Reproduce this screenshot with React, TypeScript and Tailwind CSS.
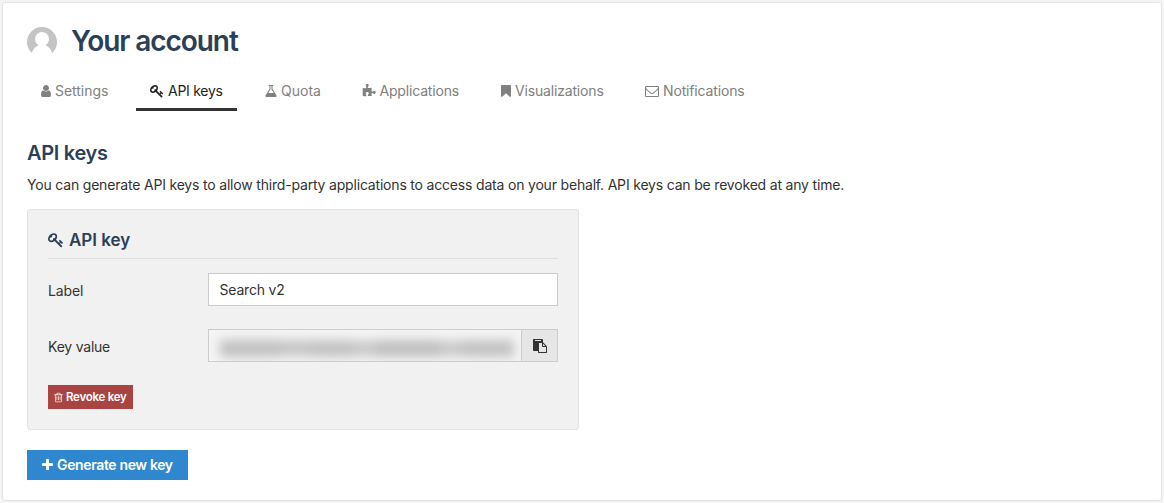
import React from "react";

const ICONS = {
  user: "M1536 1399q0 109-62.5 187t-150.5 78h-854q-88 0-150.5-78t-62.5-187q0-85 8.5-160.5t31.5-152 58.5-131 94-89 134.5-34.5q131 128 313 128t313-128q76 0 134.5 34.5t94 89 58.5 131 31.5 152 8.5 160.5zm-256-887q0 159-112.5 271.5t-271.5 112.5-271.5-112.5-112.5-271.5 112.5-271.5 271.5-112.5 271.5 112.5 112.5 271.5z",
  key: "M832 512q0-80-56-136t-136-56-136 56-56 136q0 42 19 83-41-19-83-19-80 0-136 56t-56 136 56 136 136 56 136-56 56-136q0-42-19-83 41 19 83 19 80 0 136-56t56-136zm851 704q0 17-49 66t-66 49q-9 0-28.5-16t-36.5-33-38.5-40-24.5-26l-96 96 220 220q28 28 28 68 0 42-39 81t-81 39q-40 0-68-28l-671-671q-176 131-365 131-163 0-265.5-102.5t-102.5-265.5q0-160 95-313t248-248 313-95q163 0 265.5 102.5t102.5 265.5q0 189-131 365l355 355 96-96q-3-3-26-24.5t-40-38.5-33-36.5-16-28.5q0-17 49-66t66-49q13 0 23 10 6 6 46 44.5t82 79.5 86.5 86 73 78 28.5 41z",
  flask: "M1591 1448q56 89 21.5 152.5t-140.5 63.5h-1152q-106 0-140.5-63.5t21.5-152.5l503-793v-399h-64q-26 0-45-19t-19-45 19-45 45-19h512q26 0 45 19t19 45-19 45-45 19h-64v399zm-779-725l-272 429h712l-272-429-20-31v-436h-128v436z",
  puzzle: "M1755 1083q0 81-44.5 135t-123.5 54q-41 0-77.5-17.5t-59-38-56.5-38-71-17.5q-110 0-110 124 0 39 16 115t15 115v5q-22 0-33 1-34 3-97.5 11.5t-115.5 13.5-98 5q-61 0-103-26.5t-42-83.5q0-37 17.5-71t38-56.5 38-59 17.5-77.5q0-79-54-123.5t-135-44.5q-84 0-143 45.5t-59 127.5q0 43 15 83t33.5 64.5 33.5 53 15 50.5q0 45-46 89-37 35-117 35-95 0-245-24-9-2-27.5-4t-27.5-4l-13-2q-1 0-3-1-2 0-2-1v-1024q2 1 17.5 3.5t34 5 21.5 3.5q150 24 245 24 80 0 117-35 46-44 46-89 0-22-15-50.5t-33.5-53-33.5-64.5-15-83q0-82 59-127.5t144-45.5q80 0 134 44.5t54 123.5q0 41-17.5 77.5t-38 59-38 56.5-17.5 71q0 57 42 83.5t103 26.5q64 0 180-15t163-17v2q-1 2-3.5 17.5t-5 34-3.5 21.5q-24 150-24 245 0 80 35 117 44 46 89 46 22 0 50.5-15t53-33.5 64.5-33.5 83-15q82 0 127.5 59t45.5 143z",
  bookmark: "M1420 128q23 0 44 9 33 13 52.5 41t19.5 62v1289q0 34-19.5 62t-52.5 41q-19 8-44 8-48 0-83-32l-441-424-441 424q-36 33-83 33-23 0-44-9-33-13-52.5-41t-19.5-62v-1289q0-34 19.5-62t52.5-41q21-9 44-9h1048z",
  envelope: "M1664 1504v-768q-32 36-69 66-268 206-426 338-51 43-83 67t-86.5 48.5-102.5 24.5h-2q-48 0-102.5-24.5t-86.5-48.5-83-67q-158-132-426-338-37-30-69-66v768q0 13 9.5 22.5t22.5 9.5h1472q13 0 22.5-9.5t9.5-22.5zm0-1051v-24.5l-.5-13-3-12.5-5.5-9-9-7.5-14-2.5h-1472q-13 0-22.5 9.5t-9.5 22.5q0 168 147 284 193 152 401 317 6 5 35 29.5t46 37.5 44.5 31.5 50.5 27.5 43 9h2q20 0 43-9t50.5-27.5 44.5-31.5 46-37.5 35-29.5q208-165 401-317 54-43 100.5-115.5t46.5-131.5zm128-37v1088q0 66-47 113t-113 47h-1472q-66 0-113-47t-47-113v-1088q0-66 47-113t113-47h1472q66 0 113 47t47 113z",
  paste: "M768 1664h896v-640h-416q-40 0-68-28t-28-68v-416h-384v1152zm256-1440v-64q0-13-9.5-22.5t-22.5-9.5h-704q-13 0-22.5 9.5t-9.5 22.5v64q0 13 9.5 22.5t22.5 9.5h704q13 0 22.5-9.5t9.5-22.5zm256 672h299l-299-299v299zm512 128v672q0 40-28 68t-68 28h-960q-40 0-68-28t-28-68v-160h-544q-40 0-68-28t-28-68v-1344q0-40 28-68t68-28h1088q40 0 68 28t28 68v328q21 13 36 28l408 408q28 28 48 76t20 88z",
  trash: "M704 736v576q0 14-9 23t-23 9h-64q-14 0-23-9t-9-23v-576q0-14 9-23t23-9h64q14 0 23 9t9 23zm256 0v576q0 14-9 23t-23 9h-64q-14 0-23-9t-9-23v-576q0-14 9-23t23-9h64q14 0 23 9t9 23zm256 0v576q0 14-9 23t-23 9h-64q-14 0-23-9t-9-23v-576q0-14 9-23t23-9h64q14 0 23 9t9 23zm128 724v-948h-896v948q0 22 7 40.5t14.5 27 10.5 8.5h832q3 0 10.5-8.5t14.5-27 7-40.5zm-672-1076h448l-48-117q-7-9-17-11h-317q-10 2-17 11zm928 32v64q0 14-9 23t-23 9h-96v948q0 83-47 143.5t-113 60.5h-832q-66 0-113-58.5t-47-141.5v-952h-96q-14 0-23-9t-9-23v-64q0-14 9-23t23-9h309l70-167q15-37 54-63t79-26h320q40 0 79 26t54 63l70 167h309q14 0 23 9t9 23z",
  plus: "M1600 736v192q0 40-28 68t-68 28h-416v416q0 40-28 68t-68 28h-192q-40 0-68-28t-28-68v-416h-416q-40 0-68-28t-28-68v-192q0-40 28-68t68-28h416v-416q0-40 28-68t68-28h192q40 0 68 28t28 68v416h416q40 0 68 28t28 68z",
};

type IconName = keyof typeof ICONS;

function Icon({ name, className, viewBox = "0 0 1792 1792" }: { name: IconName; className: string; viewBox?: string }) {
  return (
    <svg viewBox={viewBox} className={`shrink-0 ${className}`} fill="currentColor" aria-hidden="true">
      <path d={ICONS[name]} />
    </svg>
  );
}

const TABS: { label: string; icon: IconName; viewBox: string; width: string; iconClass: string; textClass: string; active?: boolean }[] = [
  { label: "Settings", icon: "user", viewBox: "256 0 1280 1792", width: "w-[95px]", iconClass: "h-[14px] w-[10px]", textClass: "tracking-[-0.04px]" },
  { label: "API keys", icon: "key", viewBox: "0 0 1792 1792", width: "w-[101px]", iconClass: "h-[14px] w-[14px]", textClass: "tracking-[-0.28px]", active: true },
  { label: "Quota", icon: "flask", viewBox: "128 0 1536 1792", width: "w-[84px]", iconClass: "h-[14px] w-[12px]", textClass: "" },
  { label: "Applications", icon: "puzzle", viewBox: "0 0 1792 1792", width: "w-[124px]", iconClass: "-ml-px h-[14px] w-[14px]", textClass: "tracking-[-0.18px] -ml-[0.5px]" },
  { label: "Visualizations", icon: "bookmark", viewBox: "256 0 1280 1792", width: "w-[130px]", iconClass: "h-[14px] w-[10px]", textClass: "tracking-[-0.17px]" },
  { label: "Notifications", icon: "envelope", viewBox: "0 0 1792 1792", width: "w-[128px]", iconClass: "h-[14px] w-[14px]", textClass: "tracking-[-0.15px]" },
];

export default function App() {
  return (
    <div className="h-[503px] w-[1164px] overflow-hidden bg-[#f4f4f4] px-[2px] pt-[2px] font-['Inter',sans-serif] text-[14px] text-[#333333]">
      <main className="h-[499px] w-[1160px] rounded-[3px] border border-[#e3e3e3] bg-white px-6">
        <header className="flex h-[76px] items-center gap-[14px] pt-px">
          <svg viewBox="0 0 30 30" className="h-[30px] w-[30px] shrink-0" aria-hidden="true">
            <circle cx="15" cy="15" r="15" fill="#c4c4c4" />
            <circle cx="15" cy="12" r="7" fill="#fff" />
            <path d="M11 16V18.500C8 20 6 22.500 4.800 26L3 30H27L25.200 26C24 22.500 22 20 19 18.500V16Z" fill="#fff" />
          </svg>
          <h1 className="whitespace-nowrap pb-[2px] text-[28px] font-semibold leading-9 tracking-[-1.06px] text-[#2c3f57]">Your account</h1>
        </header>

        <nav className="flex h-8 gap-[14px]">
          {TABS.map((tab) => (
            <a
              key={tab.label}
              className={`flex shrink-0 items-center gap-1 border-b-3 px-[14px] pb-[6px] ${tab.width} ${
                tab.active ? "border-[#333333] text-[#222222]" : "border-transparent text-[#808080]"
              }`}
            >
              <Icon name={tab.icon} viewBox={tab.viewBox} className={tab.iconClass} />
              <span className={`whitespace-nowrap leading-5 ${tab.textClass}`}>{tab.label}</span>
            </a>
          ))}
        </nav>

        <h2 className="mt-[28px] text-[20px] font-semibold leading-7 tracking-[-0.3px] text-[#2c3f57]">API keys</h2>
        <p className="mt-[8px] whitespace-nowrap leading-5 tracking-[-0.187px]">
          You can generate API keys to allow third-party applications to access data on your behalf. API keys can be revoked at any time.
        </p>

        <section className="mt-[14px] h-[221px] w-[552px] rounded-[3px] border border-[#e3e3e3] bg-[#f1f1f1] px-5">
          <h3 className="flex h-[49px] items-center gap-[5px] border-b border-[#dfdfdf] pt-[12px] text-[17px] font-semibold text-[#2c3f57]">
            <Icon name="key" className="h-4 w-4" />
            <span className="pt-[2px]">API key</span>
          </h3>
          <div className="mt-[14px] flex h-[33px] items-center">
            <label className="w-[160px] pt-[2px] tracking-[-0.1px]">Label</label>
            <div className="flex h-[33px] w-[350px] items-center border border-[#cccccc] bg-white px-[10.5px] tracking-[-0.2px]">Search v2</div>
          </div>
          <div className="mt-[23px] flex h-[33px] items-center">
            <label className="w-[160px] pt-[2px] tracking-[-0.22px]">Key value</label>
            <div className="flex h-[33px] w-[350px] border border-[#cccccc] bg-[#f5f5f5]">
              <div className="flex w-[313px] items-center overflow-hidden pl-[11px] pt-[5px]">
                <div className="flex h-[18px] w-[294px] items-center blur-[5.5px]">
                  <div className="h-[17px] w-[60px] bg-[#c0c0c0]" />
                  <div className="h-[16px] w-[30px] bg-[#c5c5c5]" />
                  <div className="h-[17px] w-[42px] bg-[#c2c2c2]" />
                  <div className="h-[15px] w-[24px] bg-[#c6c6c6]" />
                  <div className="h-[17px] w-[64px] bg-[#bfbfbf]" />
                  <div className="h-[15px] w-[22px] bg-[#c6c6c6]" />
                  <div className="h-[17px] w-[52px] bg-[#c2c2c2]" />
                </div>
              </div>
              <button className="flex w-[36px] items-center justify-center border-l border-[#cccccc] bg-[#e6e6e6]">
                <Icon name="paste" className="h-[14px] w-[14px]" />
              </button>
            </div>
          </div>
          <button className="mt-[23px] flex h-6 w-[85px] items-center gap-[3px] bg-[#a94442] pl-[6px] text-[11.5px] font-semibold tracking-[-0.26px] text-white">
            <Icon name="trash" viewBox="192 0 1408 1792" className="h-[11px] w-[9px] opacity-85" />
            <span className="whitespace-nowrap pt-[2px]">Revoke key</span>
          </button>
        </section>

        <button className="mt-5 flex h-[30px] w-[161px] items-center gap-1 bg-[#2f88cf] pb-px pl-[15px] text-[14px] font-semibold tracking-[-0.36px] text-white">
          <Icon name="plus" viewBox="192 0 1408 1792" className="h-[14px] w-[11px]" />
          <span className="whitespace-nowrap">Generate new key</span>
        </button>
      </main>
    </div>
  );
}
